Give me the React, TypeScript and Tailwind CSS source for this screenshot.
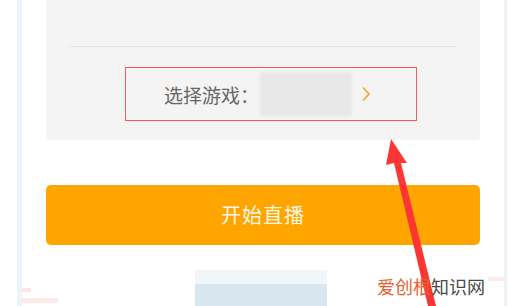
import React from "react";

const App = () => {
  return (
    <div
      className="relative w-[510px] h-[306px] overflow-hidden bg-white"
      style={{ fontFamily: '"Noto Sans CJK SC", "Noto Sans", sans-serif' }}
    >
      <div className="ml-[17px] w-[490px] h-full border-l-[5px] border-r-[3px] border-[#eef3fa] bg-white">
        {/* game settings panel */}
        <div className="mx-[24px] pt-[46px] pb-[19px] bg-[#f4f4f4] rounded-b-[4px]">
          <div className="mx-[24px] h-px bg-[#e3e3e3]" />
          <div className="ml-[79px] mt-[20px] w-[292px] h-[54px] border-[1.5px] border-[#f85a5e] flex items-center">
            <span className="ml-[38px] text-[19px] leading-none text-[#666666]">选择游戏：</span>
            <div className="ml-[1px] w-[92px] h-[44px] bg-[#e8e8e8] rounded-[2px] blur-[1px]" />
            <svg width="10" height="16" viewBox="0 0 10 16" className="ml-[9px]">
              <path d="M2 1.5 L8 8 L2 14.5" fill="none" stroke="#f5a623" strokeWidth="1.6" />
            </svg>
          </div>
        </div>

        {/* start button */}
        <div className="mx-[24px] mt-[45px] h-[60px] rounded-[5px] bg-[#fea500] flex items-center justify-center">
          <span className="text-[20px] tracking-[1px] text-[#fff8e6]">开始直播</span>
        </div>

        {/* blurred thumbnail */}
        <div className="ml-[173px] mt-[25px] w-[132px] h-[40px] flex flex-col">
          <div className="h-[14px] bg-[#f1f6f8]" />
          <div className="flex-1 bg-[#d8e7ee]" />
        </div>
      </div>

      {/* faint marks */}
      <div className="absolute left-[22px] top-[288px] w-[9px] h-[4px] bg-[#fde5e5]" />
      <div className="absolute left-[22px] top-[298px] w-[36px] h-[5px] bg-[#fde8e8]" />
      <div className="absolute left-[488px] top-[277px] w-[16px] h-[4px] bg-[#fdeaea]" />

      {/* red arrow */}
      <svg className="absolute left-0 top-0" width="510" height="306" viewBox="0 0 510 306">
        <path d="M391 139 L407 163 L401 163 L436 306 L428 306 L394 163 L386 165 Z" fill="#fe3535" />
      </svg>

      {/* watermark */}
      <div className="absolute left-[377px] top-[277px] text-[18px] leading-none">
        <span className="text-[#e3622c]">爱创根</span>
        <span className="text-[#4a4a4a]">知识网</span>
      </div>
    </div>
  );
};

export default App;
